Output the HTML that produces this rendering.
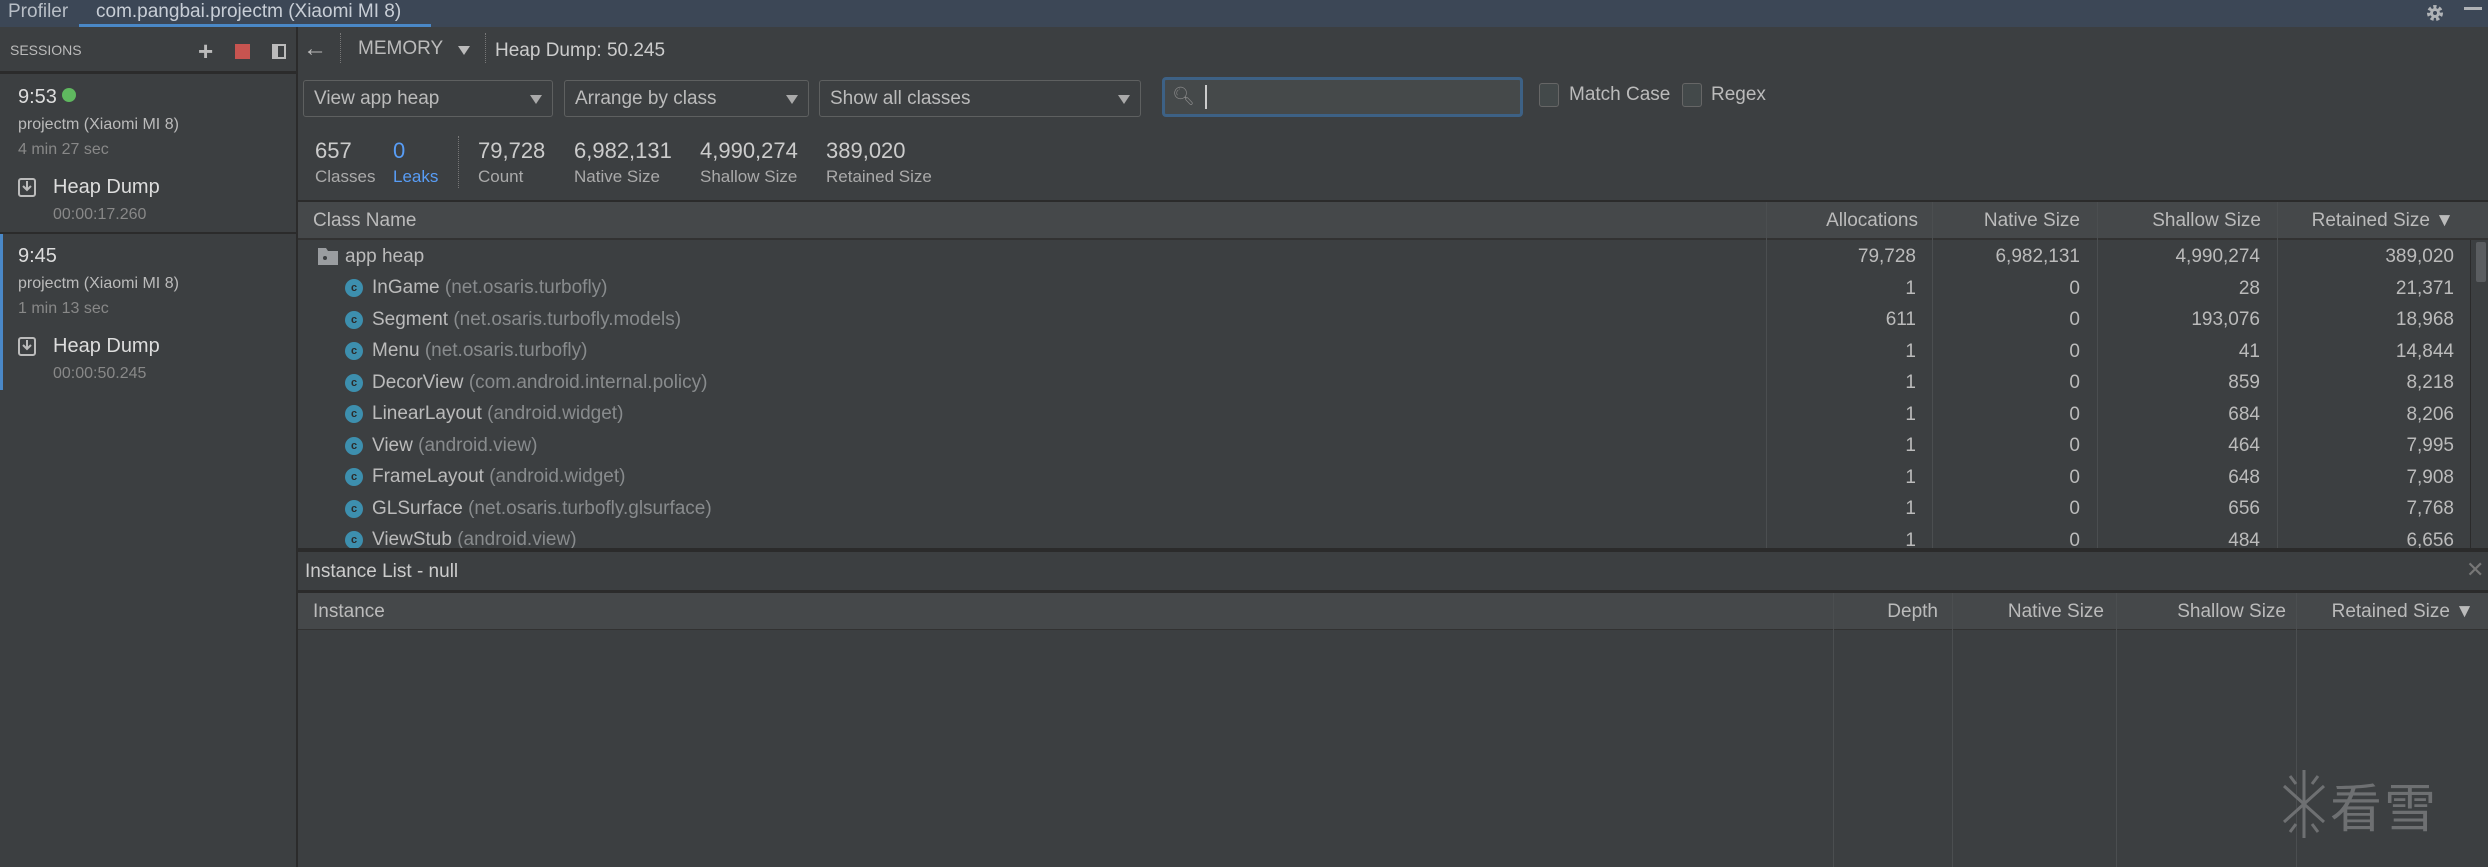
<!DOCTYPE html>
<html><head><meta charset="utf-8"><style>
*{margin:0;padding:0;box-sizing:border-box}
body{width:2488px;height:867px;background:#3c3f41;font-family:"Liberation Sans","Noto Sans CJK SC",sans-serif;color:#bbbbbb;position:relative;overflow:hidden}
.a{position:absolute;white-space:nowrap}
.vl{position:absolute;width:1px;background:#4b4e50}
.dd{position:absolute;top:80px;height:37px;border:1px solid #5e6060;border-radius:3px;background:#3c3f41;font-size:19px;line-height:35px;padding-left:10px;color:#bbbbbb}
.dd:after{content:"";position:absolute;right:10px;top:14px;border-left:6px solid transparent;border-right:6px solid transparent;border-top:9px solid #aaa}
.row{position:absolute;left:297px;width:2171px;height:31.5px;font-size:19px;line-height:31.5px}
.row .n{position:absolute;left:75px}
.row .p{color:#888b8d}
.row .ic{position:absolute;left:48px;top:7px;width:18px;height:18px;border-radius:50%;background:#3d8fae;color:#2b2b2b;font-size:11px;line-height:18px;text-align:center;font-weight:bold}
.num{position:absolute;text-align:right}
.hd{position:absolute;font-size:19px;line-height:37px;text-align:right}
</style></head><body>
<!-- title bar -->
<div class="a" style="left:0;top:0;width:2488px;height:27px;background:#3c4756"></div>
<div class="a" style="left:8px;top:0;font-size:19px;line-height:24px;color:#b8bec6">Profiler</div>
<div class="a" style="left:96px;top:0;font-size:19px;line-height:24px;color:#c8ced6">com.pangbai.projectm (Xiaomi MI 8)</div>
<div class="a" style="left:79px;top:24px;width:352px;height:3px;background:#4a88c7"></div>
<svg class="a" style="left:2424px;top:2px" width="22" height="22" viewBox="0 0 22 22"><circle cx="11" cy="11" r="6" fill="none" stroke="#b0b3b6" stroke-width="4" stroke-dasharray="3 2.3"/><circle cx="11" cy="11" r="5" fill="#b0b3b6"/><circle cx="11" cy="11" r="2" fill="#3c4756"/></svg>
<div class="a" style="left:2464px;top:7px;width:18px;height:3px;background:#b0b3b6"></div>

<!-- sessions panel -->
<div class="a" style="left:10px;top:42px;font-size:14px;color:#bbb">SESSIONS</div>
<div class="a" style="left:198px;top:36px;font-size:26px;color:#bbb;font-weight:bold">+</div>
<div class="a" style="left:235px;top:44px;width:15px;height:15px;background:#c75450"></div>
<div class="a" style="left:272px;top:44px;width:14px;height:15px;border:2px solid #bbb;border-left-width:6px"></div>
<div class="a" style="left:0;top:71px;width:297px;height:3px;background:#2b2b2b"></div>
<div class="a" style="left:296px;top:27px;width:2px;height:840px;background:#2b2b2b"></div>

<div class="a" style="left:18px;top:86px;font-size:20px;color:#ddd">9:53</div>
<div class="a" style="left:62px;top:88px;width:14px;height:14px;border-radius:50%;background:#5fb85f"></div>
<div class="a" style="left:18px;top:116px;font-size:16px;color:#bbb">projectm (Xiaomi MI 8)</div>
<div class="a" style="left:18px;top:141px;font-size:16px;color:#888">4 min 27 sec</div>
<svg class="a" style="left:18px;top:178px" width="18" height="19" viewBox="0 0 18 19"><rect x="1" y="1" width="16" height="17" rx="2" fill="none" stroke="#bbb" stroke-width="2"/><path d="M9 3v9M5 8l4 4 4-4" stroke="#bbb" stroke-width="2" fill="none"/></svg>
<div class="a" style="left:53px;top:176px;font-size:20px;color:#ddd">Heap Dump</div>
<div class="a" style="left:53px;top:206px;font-size:16px;color:#888">00:00:17.260</div>
<div class="a" style="left:0;top:232px;width:297px;height:2px;background:#2b2b2b"></div>

<div class="a" style="left:0;top:234px;width:3px;height:156px;background:#4a88c7"></div>
<div class="a" style="left:18px;top:245px;font-size:20px;color:#ddd">9:45</div>
<div class="a" style="left:18px;top:275px;font-size:16px;color:#bbb">projectm (Xiaomi MI 8)</div>
<div class="a" style="left:18px;top:300px;font-size:16px;color:#888">1 min 13 sec</div>
<svg class="a" style="left:18px;top:337px" width="18" height="19" viewBox="0 0 18 19"><rect x="1" y="1" width="16" height="17" rx="2" fill="none" stroke="#bbb" stroke-width="2"/><path d="M9 3v9M5 8l4 4 4-4" stroke="#bbb" stroke-width="2" fill="none"/></svg>
<div class="a" style="left:53px;top:335px;font-size:20px;color:#ddd">Heap Dump</div>
<div class="a" style="left:53px;top:365px;font-size:16px;color:#888">00:00:50.245</div>

<!-- toolbar -->
<div class="a" style="left:303px;top:37px;font-size:24px;color:#bbb;line-height:24px">&#8592;</div>
<div class="a" style="left:340px;top:33px;height:30px;border-left:1px dotted #777"></div>
<div class="a" style="left:358px;top:38px;font-size:19px;color:#bbb">MEMORY</div>
<div class="a" style="left:458px;top:46px;border-left:6px solid transparent;border-right:6px solid transparent;border-top:9px solid #bbb"></div>
<div class="a" style="left:485px;top:33px;height:30px;border-left:1px dotted #777"></div>
<div class="a" style="left:495px;top:40px;font-size:19px;color:#ccc">Heap Dump: 50.245</div>

<!-- filters -->
<div class="dd" style="left:303px;width:250px">View app heap</div>
<div class="dd" style="left:564px;width:245px">Arrange by class</div>
<div class="dd" style="left:819px;width:322px">Show all classes</div>
<div class="a" style="left:1162px;top:77px;width:361px;height:40px;border:3px solid #3d6185;border-radius:4px;background:#45494a"></div>
<div class="a" style="left:1172px;top:86px;font-size:18px;color:#888">&#x1F50D;&#xFE0E;</div>
<div class="a" style="left:1205px;top:85px;width:2px;height:24px;background:#ccc"></div>
<div class="a" style="left:1539px;top:83px;width:20px;height:24px;border:1px solid #666;border-radius:3px;background:#43494a"></div>
<div class="a" style="left:1569px;top:84px;font-size:19px;color:#bbb">Match Case</div>
<div class="a" style="left:1682px;top:83px;width:20px;height:24px;border:1px solid #666;border-radius:3px;background:#43494a"></div>
<div class="a" style="left:1711px;top:84px;font-size:19px;color:#bbb">Regex</div>

<!-- stats -->
<div class="a" style="left:315px;top:138px;font-size:22px;color:#ccc">657</div>
<div class="a" style="left:315px;top:167px;font-size:17px;color:#aaa">Classes</div>
<div class="a" style="left:393px;top:138px;font-size:22px;color:#589df6">0</div>
<div class="a" style="left:393px;top:167px;font-size:17px;color:#589df6">Leaks</div>
<div class="a" style="left:458px;top:136px;height:52px;border-left:1px dotted #777"></div>
<div class="a" style="left:478px;top:138px;font-size:22px;color:#ccc">79,728</div>
<div class="a" style="left:478px;top:167px;font-size:17px;color:#aaa">Count</div>
<div class="a" style="left:574px;top:138px;font-size:22px;color:#ccc">6,982,131</div>
<div class="a" style="left:574px;top:167px;font-size:17px;color:#aaa">Native Size</div>
<div class="a" style="left:700px;top:138px;font-size:22px;color:#ccc">4,990,274</div>
<div class="a" style="left:700px;top:167px;font-size:17px;color:#aaa">Shallow Size</div>
<div class="a" style="left:826px;top:138px;font-size:22px;color:#ccc">389,020</div>
<div class="a" style="left:826px;top:167px;font-size:17px;color:#aaa">Retained Size</div>

<!-- class table header -->
<div class="a" style="left:298px;top:200px;width:2190px;height:2px;background:#2b2b2b"></div>
<div class="a" style="left:298px;top:202px;width:2190px;height:36px;background:#45484a"></div>
<div class="a" style="left:298px;top:238px;width:2190px;height:2px;background:#323232"></div>
<div class="a" style="left:313px;top:202px;font-size:19px;line-height:37px">Class Name</div>
<div class="hd" style="left:1766px;width:152px;top:202px">Allocations</div>
<div class="hd" style="left:1932px;width:148px;top:202px">Native Size</div>
<div class="hd" style="left:2097px;width:164px;top:202px">Shallow Size</div>
<div class="hd" style="left:2277px;width:177px;top:202px">Retained Size &#9660;</div>
<div class="vl" style="left:1766px;top:202px;height:346px"></div>
<div class="vl" style="left:1932px;top:202px;height:346px"></div>
<div class="vl" style="left:2097px;top:202px;height:346px"></div>
<div class="vl" style="left:2277px;top:202px;height:346px"></div>
<div class="a" style="left:2470px;top:240px;width:18px;height:308px;background:#3c3f41;border-left:1px solid #2b2b2b"></div>
<div class="a" style="left:2476px;top:242px;width:10px;height:40px;background:#5a5d60;border-radius:2px"></div>

<div style="position:absolute;left:0;top:240px;width:2470px;height:308px;overflow:hidden">
<div style="position:absolute;left:0;top:-240px;width:2470px;height:900px">
<div class="row" style="top:241px"><svg style="position:absolute;left:21px;top:7px" width="20" height="17" viewBox="0 0 20 17"><path d="M0 0h8l2 3h10v14H0z" fill="#9a9da0"/><circle cx="7" cy="10" r="2" fill="#3c3f41"/></svg><span style="position:absolute;left:48px">app heap</span></div>
<div class="row" style="top:272px"><span class="ic">c</span><span class="n">InGame <span class="p">(net.osaris.turbofly)</span></span></div>
<div class="row" style="top:304px"><span class="ic">c</span><span class="n">Segment <span class="p">(net.osaris.turbofly.models)</span></span></div>
<div class="row" style="top:335px"><span class="ic">c</span><span class="n">Menu <span class="p">(net.osaris.turbofly)</span></span></div>
<div class="row" style="top:367px"><span class="ic">c</span><span class="n">DecorView <span class="p">(com.android.internal.policy)</span></span></div>
<div class="row" style="top:398px"><span class="ic">c</span><span class="n">LinearLayout <span class="p">(android.widget)</span></span></div>
<div class="row" style="top:430px"><span class="ic">c</span><span class="n">View <span class="p">(android.view)</span></span></div>
<div class="row" style="top:461px"><span class="ic">c</span><span class="n">FrameLayout <span class="p">(android.widget)</span></span></div>
<div class="row" style="top:493px"><span class="ic">c</span><span class="n">GLSurface <span class="p">(net.osaris.turbofly.glsurface)</span></span></div>
<div class="row" style="top:524px"><span class="ic">c</span><span class="n">ViewStub <span class="p">(android.view)</span></span></div>
</div>
<div style="position:absolute;left:0;top:-240px;font-size:19px">
<div class="num" style="left:1766px;width:150px;top:241px;line-height:31.5px">79,728<br>1<br>611<br>1<br>1<br>1<br>1<br>1<br>1<br>1</div>
<div class="num" style="left:1932px;width:148px;top:241px;line-height:31.5px">6,982,131<br>0<br>0<br>0<br>0<br>0<br>0<br>0<br>0<br>0</div>
<div class="num" style="left:2097px;width:163px;top:241px;line-height:31.5px">4,990,274<br>28<br>193,076<br>41<br>859<br>684<br>464<br>648<br>656<br>484</div>
<div class="num" style="left:2277px;width:177px;top:241px;line-height:31.5px">389,020<br>21,371<br>18,968<br>14,844<br>8,218<br>8,206<br>7,995<br>7,908<br>7,768<br>6,656</div>
</div>
</div>

<!-- instance list -->
<div class="a" style="left:298px;top:548px;width:2190px;height:4px;background:#2b2b2b"></div>
<div class="a" style="left:305px;top:561px;font-size:19px;color:#ccc">Instance List - null</div>
<div class="a" style="left:2466px;top:557px;font-size:22px;color:#777">&#x2715;</div>
<div class="a" style="left:298px;top:590px;width:2190px;height:3px;background:#2b2b2b"></div>
<div class="a" style="left:298px;top:593px;width:2190px;height:36px;background:#45484a"></div>
<div class="a" style="left:298px;top:629px;width:2190px;height:1px;background:#323232"></div>
<div class="a" style="left:313px;top:593px;font-size:19px;line-height:37px">Instance</div>
<div class="hd" style="left:1833px;width:105px;top:593px">Depth</div>
<div class="hd" style="left:1952px;width:152px;top:593px">Native Size</div>
<div class="hd" style="left:2116px;width:170px;top:593px">Shallow Size</div>
<div class="hd" style="left:2296px;width:178px;top:593px">Retained Size &#9660;</div>
<div class="vl" style="left:1833px;top:593px;height:274px"></div>
<div class="vl" style="left:1952px;top:593px;height:274px"></div>
<div class="vl" style="left:2116px;top:593px;height:274px"></div>
<div class="vl" style="left:2296px;top:593px;height:274px"></div>

<!-- watermark -->
<svg class="a" style="left:2282px;top:768px" width="44" height="72" viewBox="0 0 44 72" stroke="#6e7072" stroke-width="3" fill="none"><path d="M22 2v68M2 18l40 36M42 18L2 54M8 8l6 8M36 8l-6 8M8 64l6-8M36 64l-6-8"/></svg>
<div class="a" style="left:2330px;top:770px;font-size:52px;line-height:70px;color:#6e7072;font-family:'Noto Sans CJK SC',sans-serif;letter-spacing:2px">看雪</div>
</body></html>
